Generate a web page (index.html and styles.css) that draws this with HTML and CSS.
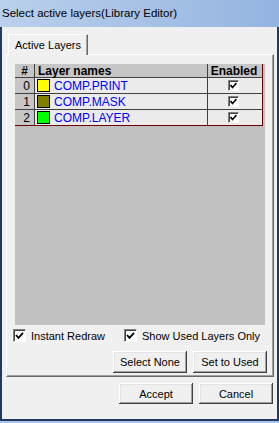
FILE: index.html
```html
<!DOCTYPE html>
<html lang="en">
<head>
    <meta charset="UTF-8">
    <meta name="viewport" content="width=device-width, initial-scale=1.0">
    <title>Select active layers</title>
    <link rel="stylesheet" href="styles.css">
</head>
<body>
    <div class="window">
        <div class="titlebar">Select active layers(Library Editor)</div>
        <div class="client">
            <div class="tabs">
                <div class="tab">Active Layers</div>
            </div>
            <div class="panel">
                <div class="grid">
                    <div class="layer-table">
                        <div class="row head">
                            <div class="cell num">#</div>
                            <div class="cell name">Layer names</div>
                            <div class="cell enabled">Enabled</div>
                        </div>
                        <div class="row">
                            <div class="cell num">0</div>
                            <div class="cell name"><span class="swatch swatch-print"></span>COMP.PRINT</div>
                            <div class="cell enabled"><span class="mini-check"><svg width="9" height="9" viewBox="0 0 9 9"><path d="M1.5 4 L3.5 6.5 L7.5 2" fill="none" stroke="#000" stroke-width="1.6"/></svg></span></div>
                        </div>
                        <div class="row">
                            <div class="cell num">1</div>
                            <div class="cell name"><span class="swatch swatch-mask"></span>COMP.MASK</div>
                            <div class="cell enabled"><span class="mini-check"><svg width="9" height="9" viewBox="0 0 9 9"><path d="M1.5 4 L3.5 6.5 L7.5 2" fill="none" stroke="#000" stroke-width="1.6"/></svg></span></div>
                        </div>
                        <div class="row last">
                            <div class="cell num">2</div>
                            <div class="cell name"><span class="swatch swatch-layer"></span>COMP.LAYER</div>
                            <div class="cell enabled"><span class="mini-check"><svg width="9" height="9" viewBox="0 0 9 9"><path d="M1.5 4 L3.5 6.5 L7.5 2" fill="none" stroke="#000" stroke-width="1.6"/></svg></span></div>
                        </div>
                    </div>
                </div>

                <div class="options">
                    <label class="check first"><span class="box"><svg width="11" height="11" viewBox="0 0 11 11"><path d="M2 5 L4.5 7.8 L9 2.8" fill="none" stroke="#000" stroke-width="1.8"/></svg></span>Instant Redraw</label>
                    <label class="check"><span class="box"><svg width="11" height="11" viewBox="0 0 11 11"><path d="M2 5 L4.5 7.8 L9 2.8" fill="none" stroke="#000" stroke-width="1.8"/></svg></span>Show Used Layers Only</label>
                </div>

                <div class="panel-buttons">
                    <button class="btn">Select None</button>
                    <button class="btn">Set to Used</button>
                </div>
            </div>

            <div class="dialog-buttons">
                <button class="btn">Accept</button>
                <button class="btn">Cancel</button>
            </div>
        </div>
    </div>
</body>
</html>
```

FILE: styles.css
```css
body {
    margin: 0;
    font-family: "Liberation Sans", Arial, sans-serif;
    font-size: 11px;
    color: #000;
}
.window {
    width: 279px;
    height: 423px;
    display: flex;
    flex-direction: column;
    background-color: #a9c4e8;
}
.titlebar {
    height: 27px;
    line-height: 27px;
    padding-left: 2px;
    font-size: 11.5px;
    background: linear-gradient(to right, #bad0ec, #94b4e0);
    white-space: nowrap;
}
.client {
    flex: 1;
    display: flex;
    flex-direction: column;
    background-color: #f0f0f0;
    border-left: 2px solid #1f3b63;
    border-right: 2px solid #1f3b63;
    border-bottom: 2px solid #1f3b63;
    margin-bottom: 2px;
    padding-top: 7px;
}
.tabs {
    display: flex;
    padding-left: 6px;
    position: relative;
    z-index: 1;
}
.tab {
    width: 72px;
    height: 20px;
    line-height: 20px;
    padding-left: 6px;
    background-color: #f0f0f0;
    border-top: 1px solid #fff;
    border-left: 1px solid #fff;
    border-right: 1px solid #696969;
    margin-bottom: -1px;
    box-shadow: inset -1px 0 #a0a0a0;
}
.panel {
    margin: 0 3px 0 4px;
    border-top: 1px solid #fff;
    border-left: 1px solid #fff;
    border-right: 1px solid #696969;
    border-bottom: 1px solid #696969;
    box-shadow: inset -1px -1px #a0a0a0;
    padding: 9px 8px 3px 8px;
}
.grid {
    height: 261px;
    background-color: #c0c0c0;
}
.layer-table {
    width: 247px;
    font-size: 12px;
    border-right: 1px solid #6b0000;
    border-bottom: 1px solid #6b0000;
}
.row {
    display: flex;
    height: 15px;
    border-bottom: 1px solid #404040;
    background-color: #ebebeb;
}
.row.head {
    height: 13px;
    background-color: #c6c6c6;
    font-weight: bold;
}
.row.last {
    border-bottom: none;
}
.cell {
    display: flex;
    align-items: center;
    white-space: nowrap;
}
.num {
    width: 20px;
    justify-content: flex-end;
    padding-right: 4px;
    box-sizing: border-box;
    border-right: 1px solid #404040;
    background-color: #c6c6c6;
}
.head .num {
    justify-content: center;
    padding-right: 0;
}
.name {
    width: 173px;
    padding-left: 2px;
    box-sizing: border-box;
    border-right: 1px solid #404040;
    color: #0000ff;
}
.head .name {
    color: #000;
    padding-left: 3px;
}
.enabled {
    width: 52px;
    justify-content: center;
}
.swatch {
    width: 11px;
    height: 11px;
    border: 1px solid #000;
    margin-right: 4px;
}
.swatch-print {
    background-color: #ffff00;
}
.swatch-mask {
    background-color: #808000;
}
.swatch-layer {
    background-color: #00ff00;
}
.mini-check {
    width: 9px;
    height: 9px;
    background-color: #fff;
    border-top: 1px solid #808080;
    border-left: 1px solid #808080;
    border-right: 1px solid #fff;
    border-bottom: 1px solid #fff;
    box-shadow: inset 1px 1px #404040;
    display: flex;
    margin-left: -1px;
}
.options {
    display: flex;
    align-items: center;
    height: 13px;
    margin-top: 4px;
    margin-left: -2px;
}
.check {
    display: flex;
    align-items: center;
    white-space: nowrap;
}
.check.first {
    width: 111px;
}
.box {
    width: 11px;
    height: 11px;
    background-color: #fff;
    border-top: 1px solid #808080;
    border-left: 1px solid #808080;
    border-right: 1px solid #fff;
    border-bottom: 1px solid #fff;
    box-shadow: inset 1px 1px #404040;
    margin-right: 5px;
    display: flex;
}
.panel-buttons {
    display: flex;
    justify-content: flex-end;
    gap: 6px;
    margin-top: 9px;
    margin-right: -2px;
}
.dialog-buttons {
    display: flex;
    justify-content: flex-end;
    gap: 6px;
    margin-top: 6px;
    padding-right: 4px;
}
.btn {
    width: 74px;
    height: 22px;
    padding: 0;
    font-family: "Liberation Sans", Arial, sans-serif;
    font-size: 11px;
    color: #000;
    background-color: #f0f0f0;
    border: none;
    box-shadow: inset -1px -1px #404040, inset 1px 1px #fff, inset -2px -2px #a0a0a0, inset 2px 2px #e3e3e3;
}
.dialog-buttons .btn {
    height: 21px;
}
```
